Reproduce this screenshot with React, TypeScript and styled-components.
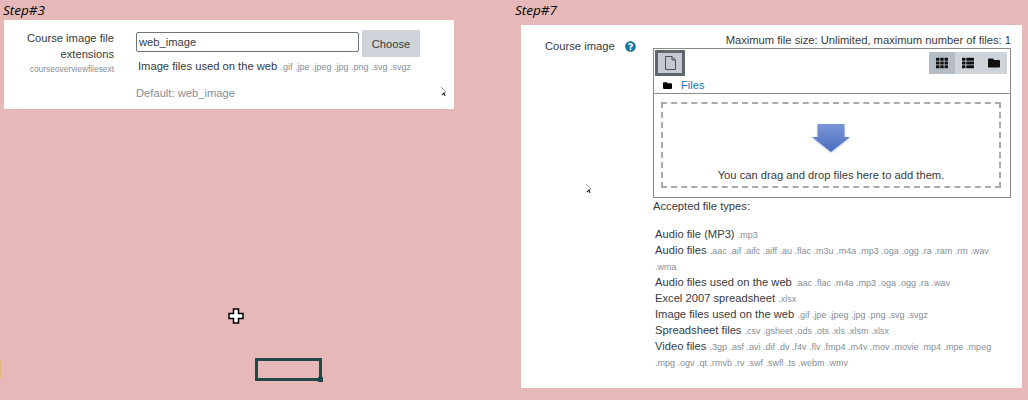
import * as React from "react";
import styled, { createGlobalStyle } from "styled-components";
import { FaFolder, FaQuestionCircle, FaTh, FaThList } from "react-icons/fa";

const fileTypes = [
  { name: "Audio file (MP3)", ext: ".mp3" },
  {
    name: "Audio files",
    ext: ".aac .aif .aifc .aiff .au .flac .m3u .m4a .mp3 .oga .ogg .ra .ram .rm .wav .wma",
  },
  { name: "Audio files used on the web", ext: ".aac .flac .m4a .mp3 .oga .ogg .ra .wav" },
  { name: "Excel 2007 spreadsheet", ext: ".xlsx" },
  { name: "Image files used on the web", ext: ".gif .jpe .jpeg .jpg .png .svg .svgz" },
  { name: "Spreadsheet files", ext: ".csv .gsheet .ods .ots .xls .xlsm .xlsx" },
  {
    name: "Video files",
    ext: ".3gp .asf .avi .dif .dv .f4v .flv .fmp4 .m4v .mov .movie .mp4 .mpe .mpeg .mpg .ogv .qt .rmvb .rv .swf .swfl .ts .webm .wmv",
  },
];

const App: React.FC = () => {
  return (
    <Page>
      <GlobalStyle />
      <LeftColumn>
        <StepLabel>Step#3</StepLabel>
        <SettingPanel>
          <SettingLabel>
            <div>Course image file extensions</div>
            <SettingName>courseoverviewfilesext</SettingName>
          </SettingLabel>
          <SettingBody>
            <InputRow>
              <TextInput readOnly value="web_image" />
              <ChooseButton>Choose</ChooseButton>
            </InputRow>
            <Description>
              Image files used on the web <Ext>.gif .jpe .jpeg .jpg .png .svg .svgz</Ext>
            </Description>
            <DefaultText>Default: web_image</DefaultText>
          </SettingBody>
          <PanelPointer style={{ right: 7, bottom: 12 }} />
        </SettingPanel>
      </LeftColumn>

      <RightColumn>
        <StepLabel>Step#7</StepLabel>
        <FormPanel>
          <FormLabel>
            <span>Course image</span>
            <HelpIcon />
          </FormLabel>
          <FormBody>
            <Limits>Maximum file size: Unlimited, maximum number of files: 1</Limits>
            <FileBox>
              <Toolbar>
                <PickerButton>
                  <svg width="11" height="14" viewBox="0 0 11 14" fill="none">
                    <path
                      d="M.5 .5h6.500l3.500 3.500v9.500h-10z M7 .5v3.500h3.500"
                      stroke="#4a4f54"
                      strokeWidth="1"
                    />
                  </svg>
                </PickerButton>
                <ViewToggle>
                  <ViewButton $active>
                    <FaTh size={12} />
                  </ViewButton>
                  <ViewButton>
                    <FaThList size={12} />
                  </ViewButton>
                  <ViewButton>
                    <FaFolder size={12} />
                  </ViewButton>
                </ViewToggle>
              </Toolbar>
              <Breadcrumb>
                <FaFolder size={9} color="#000" />
                <FilesLink>Files</FilesLink>
              </Breadcrumb>
              <DropArea>
                <ArrowIcon width="38" height="30" viewBox="0 0 38 30">
                  <defs>
                    <linearGradient id="arrowFill" x1="0" y1="0" x2="0" y2="1">
                      <stop offset="0" stopColor="#7c97d8" />
                      <stop offset="1" stopColor="#4a6cc0" />
                    </linearGradient>
                  </defs>
                  <path d="M5.500 0h27v13h5.500L19 28 0 13h5.500z" fill="url(#arrowFill)" />
                </ArrowIcon>
                <DropText>You can drag and drop files here to add them.</DropText>
              </DropArea>
            </FileBox>
            <AcceptedTitle>Accepted file types:</AcceptedTitle>
            <TypeList>
              {fileTypes.map((type) => (
                <TypeRow key={type.name}>
                  {type.name} <Ext>{type.ext}</Ext>
                </TypeRow>
              ))}
            </TypeList>
          </FormBody>
          <PanelPointer style={{ left: 64, top: 158 }} />
        </FormPanel>
      </RightColumn>

      <CrossCursor>
        <svg width="16" height="16" viewBox="0 0 16 16">
          <path
            d="M5.500 1h5v4.500h4.500v5h-4.500v4.500h-5v-4.500h-4.500v-5h4.500z"
            fill="#fff"
            stroke="#000"
            strokeWidth="1.500"
          />
        </svg>
      </CrossCursor>
      <SelectionBox>
        <SelectionHandle />
      </SelectionBox>
      <EdgeMark />
    </Page>
  );
};

const PanelPointer: React.FC<{ style: React.CSSProperties }> = ({ style }) => (
  <PointerMark style={style}>
    <svg width="7" height="11" viewBox="0 0 7 11" fill="none">
      <path d="M1 1l5 5-2 .5" stroke="#9a9a9a" strokeWidth="1" />
      <path d="M2 9l2-2 1 3" stroke="#333" strokeWidth="1.200" />
    </svg>
  </PointerMark>
);

const GlobalStyle = createGlobalStyle`
  html, body {
    margin: 0;
    padding: 0;
    background: #e6b8b8;
    font-family: "Liberation Sans", Arial, sans-serif;
    color: #373a3c;
  }
`;

const Page = styled.div`
  position: relative;
  width: 1028px;
  height: 400px;
  overflow: hidden;
  display: flex;
  background: #e6b8b8;
`;

const LeftColumn = styled.div`
  width: 450px;
  margin-left: 4px;
`;

const RightColumn = styled.div`
  width: 501px;
  margin-left: 67px;
`;

const StepLabel = styled.div`
  height: 20px;
  margin-left: -1px;
  padding-top: 1px;
  box-sizing: border-box;
  font-family: "Open Sans", sans-serif;
  font-style: italic;
  font-size: 13.500px;
  line-height: 18px;
  color: #000;
  ${RightColumn} & {
    margin-left: -6px;
    height: 25px;
  }
`;

const SettingPanel = styled.div`
  position: relative;
  height: 89px;
  background: #fff;
  display: flex;
  box-sizing: border-box;
  padding-top: 10px;
`;

const SettingLabel = styled.div`
  width: 110px;
  flex: none;
  text-align: right;
  font-size: 11.200px;
  line-height: 16px;
  padding-left: 16px;
  box-sizing: border-box;
`;

const SettingName = styled.div`
  font-size: 8.400px;
  line-height: 12px;
  margin-top: 1px;
  color: #868e96;
`;

const SettingBody = styled.div`
  margin-left: 22px;
  flex: 1;
`;

const InputRow = styled.div`
  display: flex;
  align-items: flex-start;
  gap: 3px;
`;

const TextInput = styled.input`
  width: 223px;
  height: 20px;
  margin-top: 2px;
  box-sizing: border-box;
  padding: 0 2px;
  border: 1px solid #6c757d;
  border-radius: 2px;
  outline: none;
  font-family: inherit;
  font-size: 11.200px;
  color: #373a3c;
`;

const ChooseButton = styled.button`
  width: 58px;
  height: 27px;
  border: none;
  padding: 0;
  background: #ced4da;
  font-family: inherit;
  font-size: 11.200px;
  color: #373a3c;
`;

const Description = styled.div`
  margin-top: 1px;
  padding-left: 2px;
  font-size: 11.200px;
  line-height: 16px;
`;

const Ext = styled.span`
  font-size: 9px;
  line-height: 1;
  color: #868e96;
`;

const DefaultText = styled.div`
  margin-top: 11px;
  font-size: 11.200px;
  line-height: 16px;
  color: #868e96;
`;

const FormPanel = styled.div`
  position: relative;
  height: 363px;
  background: #fff;
  display: flex;
`;

const FormLabel = styled.div`
  width: 132px;
  flex: none;
  box-sizing: border-box;
  padding: 14px 0 0 24px;
  display: flex;
  font-size: 11.200px;
  line-height: 14px;
  gap: 10px;
`;

const HelpIcon = styled(FaQuestionCircle)`
  width: 11px;
  height: 11px;
  margin-top: 2px;
  color: #1177a0;
`;

const FormBody = styled.div`
  width: 358px;
`;

const Limits = styled.div`
  height: 23px;
  box-sizing: border-box;
  padding-top: 8px;
  text-align: right;
  white-space: nowrap;
  font-size: 11.200px;
  line-height: 14px;
`;

const FileBox = styled.div`
  height: 150px;
  box-sizing: border-box;
  border: 1px solid #8a8a8a;
`;

const Toolbar = styled.div`
  display: flex;
  justify-content: space-between;
  padding: 1px 3px 0 1px;
`;

const PickerButton = styled.div`
  width: 30px;
  height: 26px;
  box-sizing: border-box;
  border: 3px solid #5f666d;
  background: #c4cad0;
  display: flex;
  align-items: center;
  justify-content: center;
`;

const ViewToggle = styled.div`
  display: flex;
  height: 22px;
  margin-top: 2px;
  background: #ced4da;
`;

const ViewButton = styled.div<{ $active?: boolean }>`
  width: 26px;
  display: flex;
  align-items: center;
  justify-content: center;
  color: #111;
  background: ${({ $active }) => ($active ? "#b4bcc4" : "transparent")};
`;

const Breadcrumb = styled.div`
  height: 18px;
  box-sizing: border-box;
  border-bottom: 1px solid #8a8a8a;
  display: flex;
  align-items: center;
  gap: 9px;
  padding: 1px 0 0 9px;
  font-size: 11.200px;
`;

const FilesLink = styled.span`
  color: #1d72b8;
`;

const DropArea = styled.div`
  height: 86px;
  margin: 8px 9px 0 7px;
  box-sizing: border-box;
  border: 2px dashed #aaa;
  display: flex;
  flex-direction: column;
  align-items: center;
  padding-top: 20px;
`;

const ArrowIcon = styled.svg`
  flex: none;
  filter: drop-shadow(0 1px 1px rgba(74, 108, 192, 0.35));
`;

const DropText = styled.div`
  margin-top: 14px;
  font-size: 11.200px;
  line-height: 14px;
`;

const AcceptedTitle = styled.div`
  margin-top: 1px;
  font-size: 11.200px;
  line-height: 14px;
`;

const TypeList = styled.div`
  margin-top: 13px;
  padding-left: 2px;
  width: 345px;
`;

const TypeRow = styled.div`
  font-size: 11.200px;
  line-height: 16px;
`;

const PointerMark = styled.div`
  position: absolute;
  line-height: 0;
`;

const CrossCursor = styled.div`
  position: absolute;
  left: 228px;
  top: 308px;
  line-height: 0;
`;

const SelectionBox = styled.div`
  position: absolute;
  left: 255px;
  top: 358px;
  width: 67px;
  height: 23px;
  box-sizing: border-box;
  border: 3px solid #24474a;
`;

const SelectionHandle = styled.div`
  position: absolute;
  right: -4px;
  bottom: -4px;
  width: 5px;
  height: 5px;
  background: #24474a;
`;

const EdgeMark = styled.div`
  position: absolute;
  left: 0;
  top: 360px;
  width: 1px;
  height: 19px;
  background: #e8b585;
`;

export default App;
